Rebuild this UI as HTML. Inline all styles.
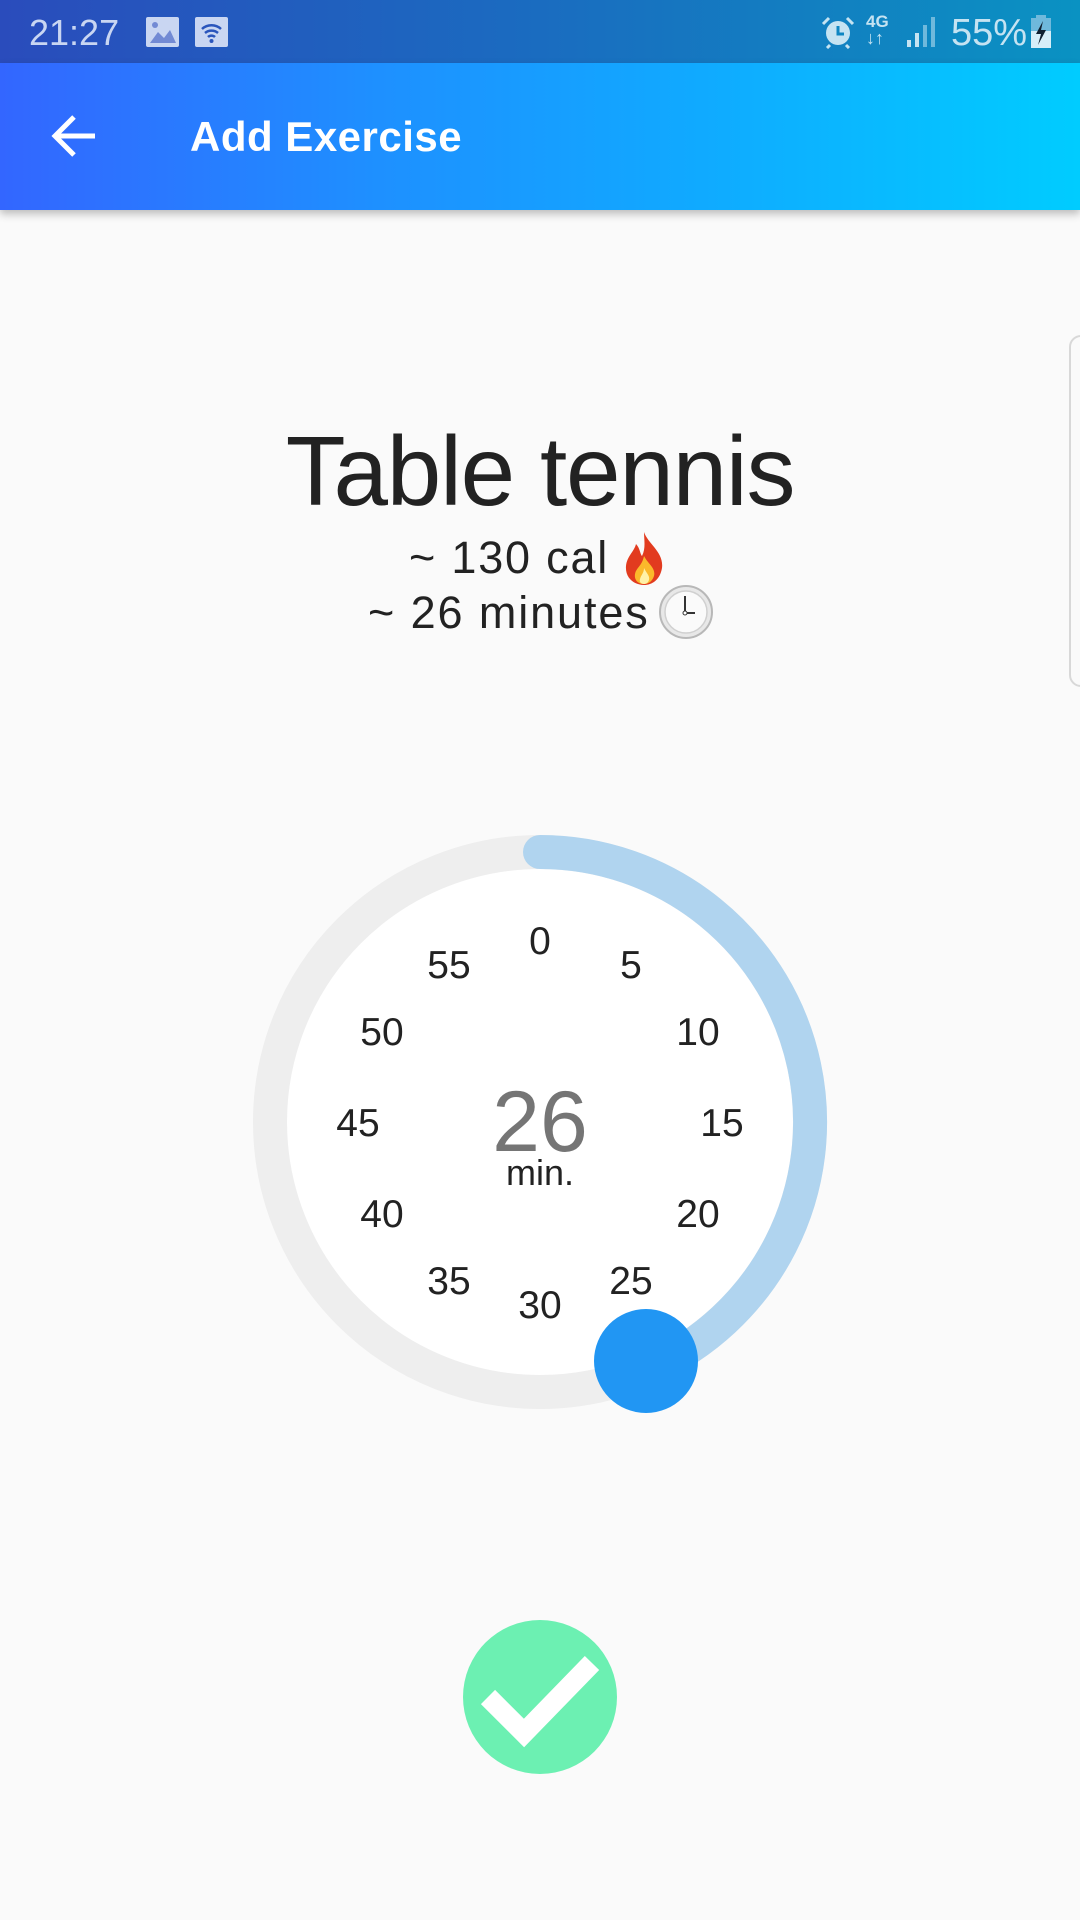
<!DOCTYPE html>
<html><head><meta charset="utf-8">
<style>
*{margin:0;padding:0;box-sizing:border-box}
html,body{width:1080px;height:1920px;background:#fafafa;overflow:hidden;font-family:"Liberation Sans",sans-serif}
.sb{position:absolute;left:0;top:0;width:1080px;height:63px;background:linear-gradient(90deg,#2a4cbc,#1a6cc0 50%,#0a92c2)}
.ab{position:absolute;left:0;top:63px;width:1080px;height:147px;background:linear-gradient(90deg,#3366ff,#1e90ff 35%,#10aaff 65%,#00ccff);box-shadow:0 4px 8px rgba(0,0,0,.25)}
.t{position:absolute;white-space:nowrap}
</style></head><body>
<div class="sb"></div>
<div class="t" style="left:29px;top:12px;font-size:36px;color:#c9d6f2;line-height:42px">21:27</div>
<svg class="t" style="left:146px;top:17px" width="34" height="31"><rect x="0" y="0" width="33" height="30" rx="2" fill="#c9d6f2"/><path d="M4 26 L12 15 L18 21 L24 13 L30 26Z" fill="#2a4cbc" opacity=".55"/><circle cx="9" cy="8" r="3" fill="#2a4cbc" opacity=".55"/></svg>
<svg class="t" style="left:195px;top:17px" width="34" height="31"><rect x="0" y="0" width="33" height="30" rx="2" fill="#c9d6f2"/><g fill="none" stroke="#2a55bc" stroke-width="2.5"><path d="M7 12 A14 14 0 0 1 26 12"/><path d="M10 16 A10 10 0 0 1 23 16"/><path d="M13 20 A5 5 0 0 1 20 20"/></g><circle cx="16.5" cy="24" r="2" fill="#2a55bc"/></svg>
<svg class="t" style="left:820px;top:15px" width="38" height="34"><circle cx="18" cy="18" r="12" fill="#c5e3f2"/><path d="M18 11 V19 H24" stroke="#0e86c2" stroke-width="3" fill="none"/><path d="M3 9 L9 3 M33 9 L27 3 M10 30 L7 33 M26 30 L29 33" stroke="#c5e3f2" stroke-width="3"/></svg>
<div class="t" style="left:866px;top:13px;font-size:17px;font-weight:bold;color:#c5e3f2;line-height:18px">4G</div>
<div class="t" style="left:866px;top:29px;font-size:18px;font-weight:bold;color:#c5e3f2;line-height:18px">↓↑</div>
<svg class="t" style="left:906px;top:16px" width="30" height="32"><rect x="1" y="24" width="4" height="7" fill="#c5e3f2"/><rect x="9" y="17" width="4" height="14" fill="#c5e3f2"/><rect x="17" y="9" width="4" height="22" fill="#6fb9dc"/><rect x="25" y="1" width="4" height="30" fill="#6fb9dc"/></svg>
<div class="t" style="left:951px;top:12px;font-size:38px;color:#c5e3f2;line-height:42px">55%</div>
<svg class="t" style="left:1030px;top:15px" width="22" height="34"><rect x="6" y="0" width="10" height="4" fill="#6fb9dc"/><rect x="1" y="3" width="20" height="30" fill="#6fb9dc"/><rect x="1" y="16" width="20" height="17" fill="#d7eef8"/><path d="M13 6 L6 19 H11 L8 30 L16 15 H11Z" fill="#102030"/></svg>
<div class="ab"></div>
<svg class="t" style="left:48px;top:112px" width="52" height="50"><path d="M7 24 H47 M26 5 L7 24 L26 43" stroke="#fff" stroke-width="5" fill="none"/></svg>
<div class="t" style="left:190px;top:113px;font-size:42px;font-weight:bold;color:#fff;line-height:48px;letter-spacing:0.5px">Add Exercise</div>
<div style="position:absolute;left:1069px;top:335px;width:40px;height:352px;border:2px solid #d8d8d8;border-radius:12px;background:#fafafa"></div>
<div class="t" style="left:0;width:1080px;text-align:center;top:416px;font-size:98px;color:#222;letter-spacing:-1.2px;line-height:110px">Table tennis</div>
<div class="t" style="left:409px;top:532px;font-size:45px;color:#222;line-height:52px;letter-spacing:1.8px">~ 130 cal</div>
<svg class="t" style="left:620px;top:530px" width="48" height="56" viewBox="0 0 48 56"><path d="M24 2 C28 14 44 22 42 38 C40 50 32 55 24 55 C14 55 5 48 6 36 C7 26 14 22 16 14 C20 18 20 24 22 26 C26 18 24 10 24 2Z" fill="#e23b1f"/><path d="M24 26 C28 34 36 38 34 46 C32 52 28 54 24 54 C18 54 14 50 15 44 C16 38 22 36 24 26Z" fill="#fbb92b"/><path d="M24 38 C27 44 30 46 29 50 C28 53 26 54 24 54 C21 54 19 52 20 49 C21 45 24 43 24 38Z" fill="#fff1a8"/></svg>
<div class="t" style="left:368px;top:587px;font-size:45px;color:#222;line-height:52px;letter-spacing:1.9px">~ 26 minutes</div>
<svg class="t" style="left:658px;top:584px" width="56" height="56" viewBox="0 0 56 56"><circle cx="28" cy="28" r="26" fill="#e8e8e8" stroke="#b8b8b8" stroke-width="2"/><circle cx="28" cy="28" r="21" fill="#fafafa" stroke="#d0d0d0" stroke-width="1.5"/><path d="M27 12 V29 H37" stroke="#333" stroke-width="2" fill="none"/><circle cx="27" cy="29" r="2" fill="#fff" stroke="#333"/></svg>
<svg class="t" style="left:0;top:0" width="1080" height="1920">
<circle cx="540" cy="1122" r="253" fill="#fff"/>
<circle cx="540" cy="1122" r="270" fill="none" stroke="#eeeeee" stroke-width="34"/>
<path d="M540 852 A270 270 0 0 1 649.8 1368.7" fill="none" stroke="#b0d4ef" stroke-width="34" stroke-linecap="round"/>
<circle cx="646" cy="1361" r="52" fill="#2196f3"/>
<g font-family="Liberation Sans, sans-serif" font-size="39" fill="#222" text-anchor="middle">
<text x="540" y="954">0</text>
<text x="631" y="978">5</text>
<text x="698" y="1045">10</text>
<text x="722" y="1136">15</text>
<text x="698" y="1227">20</text>
<text x="631" y="1294">25</text>
<text x="540" y="1318">30</text>
<text x="449" y="1294">35</text>
<text x="382" y="1227">40</text>
<text x="358" y="1136">45</text>
<text x="382" y="1045">50</text>
<text x="449" y="978">55</text>
</g>
<text x="540" y="1151" font-family="Liberation Sans, sans-serif" font-size="86" fill="#757575" text-anchor="middle">26</text>
<text x="540" y="1185" font-family="Liberation Sans, sans-serif" font-size="36" fill="#222" text-anchor="middle">min.</text>
<circle cx="540" cy="1697" r="77" fill="#6cf0b2"/>
<path d="M488 1697 L524 1733 L592 1663" stroke="#fff" stroke-width="20" fill="none"/>
</svg>
</body></html>
